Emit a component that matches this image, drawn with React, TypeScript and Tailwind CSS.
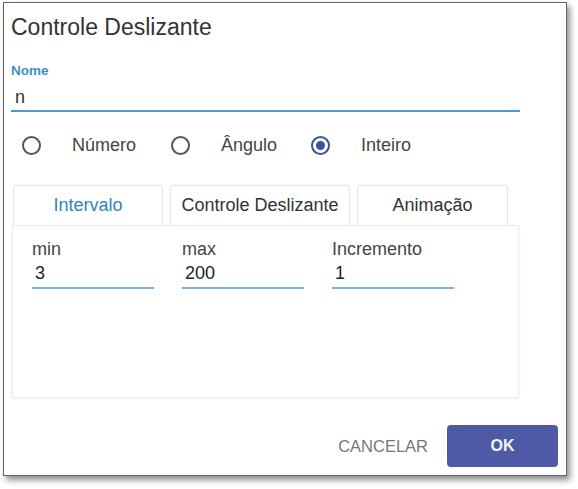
import { useState } from "react";

const font = { fontFamily: "'Liberation Sans', Arial, sans-serif" };

function Radio({ label, checked, className }: { label: string; checked?: boolean; className?: string }) {
  return (
    <label className={`flex items-center gap-[31px] ${className ?? ""}`}>
      <span
        className={`grid size-[19px] place-items-center rounded-full border-2 ${
          checked ? "border-[#3b4fa3]" : "border-[#555]"
        }`}
      >
        {checked ? <span className="size-[9px] rounded-full bg-[#3b4fa3]" /> : null}
      </span>
      <span className="text-[18px] leading-[22px] text-[#444]">{label}</span>
    </label>
  );
}

function Field({ label, value }: { label: string; value: string }) {
  return (
    <div className="flex w-[122px] flex-col">
      <span className="text-[18px] leading-[20px] text-[#444]">{label}</span>
      <div className="mt-[3px] border-b-2 border-[#7ab4da] pb-[3px] pl-[3px] text-[18px] leading-[22px] text-[#222]">
        {value}
      </div>
    </div>
  );
}

export default function App() {
  const [tab, setTab] = useState(0);
  const tabs = [
    { label: "Intervalo", w: "w-[150px]" },
    { label: "Controle Deslizante", w: "w-[180px]" },
    { label: "Animação", w: "w-[151px]" },
  ];

  return (
    <div className="min-h-[489px] bg-white pt-[2px]" style={font}>
      <div className="ml-[3px] flex h-[474px] w-[564px] flex-col border border-[#666] bg-white px-[7px] shadow-[3px_4px_6px_rgba(0,0,0,0.45)]">
        <h1 className="mt-[10px] text-[23px] leading-[28px] text-[#333]">Controle Deslizante</h1>

        <span className="mt-[22px] text-[13.5px] font-bold leading-[16px] text-[#3d8fc4]">Nome</span>
        <div className="mt-[6px] w-[509px] border-b-2 border-[#4b9bd0] pb-[1px] pl-[4px] text-[18px] leading-[24px] text-[#333]">
          n
        </div>

        <div className="mt-[22px] flex items-center pl-[11px]">
          <Radio label="Número" className="w-[149px]" />
          <Radio label="Ângulo" className="w-[140px]" />
          <Radio label="Inteiro" checked />
        </div>

        <div className="mt-[29px] ml-[1px] flex flex-col">
          <div className="relative z-10 flex gap-[7px] pl-[1px]">
            {tabs.map((t, i) => (
              <button
                key={t.label}
                onClick={() => setTab(i)}
                className={`${t.w} h-[40px] rounded-t-[3px] border border-[#e6e6e6] text-[18px] shadow-[0_-1px_2px_rgba(0,0,0,0.04)] ${
                  tab === i ? "-mb-px border-b-white bg-white text-[#2f86b8]" : "border-b-0 bg-white text-[#333]"
                }`}
              >
                {t.label}
              </button>
            ))}
          </div>
          <div className="flex h-[173px] w-[507px] gap-[28px] border border-[#ebebeb] px-[19px] pt-[13px] shadow-[0_1px_3px_rgba(0,0,0,0.05)]">
            <Field label="min" value="3" />
            <Field label="max" value="200" />
            <Field label="Incremento" value="1" />
          </div>
        </div>

        <div className="mt-auto mb-[8px] mr-[1px] flex items-center justify-end">
          <button className="mr-[19px] text-[16.5px] text-[#777]">CANCELAR</button>
          <button className="h-[42px] w-[111px] rounded-[4px] bg-[#4e5aa5] text-[16px] font-bold text-[#f4f4f4]">
            OK
          </button>
        </div>
      </div>
    </div>
  );
}
